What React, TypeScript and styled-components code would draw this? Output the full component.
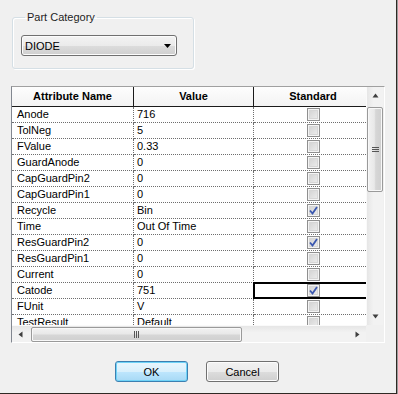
import React from "react";
import styled, { createGlobalStyle } from "styled-components";

const Global = createGlobalStyle`
  html, body { margin: 0; padding: 0; background: #9c9c9c; }
  body { font-family: "Liberation Sans", Arial, sans-serif; font-size: 11px; color: #000; }
  * { box-sizing: border-box; }
`;

const Window = styled.div`
  width: 397px;
  height: 394px;
  background: #f0f0f0;
  border-right: 1px solid #2f2924;
  border-bottom: 1px solid #2f2924;
  padding: 11px 0 0 11px;
  display: flex;
  flex-direction: column;
  overflow: hidden;
`;

const Group = styled.fieldset`
  margin: 0 0 17px 1px;
  width: 182px;
  height: 58px;
  padding: 0 0 0 8px;
  border: 1px solid #d5dfe5;
  border-radius: 3px;
  box-shadow: inset 1px 1px 0 #fff, 1px 1px 0 #fff;
`;

const Legend = styled.legend`
  padding: 0 2px;
  margin-left: 4px;
  font-size: 11px;
  line-height: 13px;
  color: #1e1e1e;
`;

const Select = styled.div`
  margin-top: 11px;
  width: 156px;
  height: 21px;
  border: 1px solid #707070;
  border-radius: 3px;
  background: linear-gradient(#f3f3f3 0%, #ebebeb 50%, #dddddd 51%, #cfcfcf 100%);
  box-shadow: inset 0 0 0 1px #fcfcfc;
  display: flex;
  align-items: center;
  justify-content: space-between;
  padding: 0 5px 0 3px;
  font-size: 11px;
  color: #000;
`;

const Grid = styled.div`
  width: 374px;
  height: 257px;
  border-top: 1px solid #a0a0a0;
  border-left: 1px solid #828790;
  border-right: 1px solid #ffffff;
  border-bottom: 1px solid #ffffff;
  display: grid;
  grid-template-columns: 354px 17px;
  grid-template-rows: 238px 17px;
  background: #f0f0f0;
`;

const TableView = styled.div`
  overflow: hidden;
  background: #fff;
  position: relative;
`;

const Row = styled.div`
  display: grid;
  grid-template-columns: 122px 120px 118px;
  width: 360px;
`;

const HeadCell = styled.div<{ $last?: boolean }>`
  height: 20px;
  background: linear-gradient(#fdfdfd, #f3f3f3);
  border-bottom: 1px solid #1a1a1a;
  border-right: ${(p) => (p.$last ? "none" : "1px solid #1a1a1a")};
  font-weight: bold;
  display: flex;
  align-items: center;
  justify-content: center;
  padding-bottom: 1px;
`;

const Cell = styled.div<{ $pad?: number; $last?: boolean; $selected?: boolean }>`
  position: relative;
  height: 16px;
  border-bottom: 1px dotted #6e6e6e;
  border-right: ${(p) => (p.$last ? "none" : "1px dotted #6e6e6e")};
  padding-left: ${(p) => p.$pad ?? 0}px;
  display: flex;
  align-items: center;
  justify-content: ${(p) => (p.$last ? "center" : "flex-start")};
  white-space: nowrap;
  line-height: 15px;
  &::after {
    content: "";
    display: ${(p) => (p.$selected ? "block" : "none")};
    position: absolute;
    top: -1px;
    left: -1px;
    right: 0;
    bottom: -1px;
    border: 2px solid #000;
  }
`;

const Check = styled.div<{ $on?: boolean }>`
  width: 13px;
  height: 13px;
  border: 1px solid #8f8f8f;
  background: #f4f4f4;
  box-shadow: inset 0 0 0 1px #f4f4f4, inset 0 0 0 2px #d6d6d6;
  background-image: linear-gradient(135deg, #cfcfcf, #f0f0f0);
  display: flex;
  align-items: center;
  justify-content: center;
  position: relative;
  z-index: 1;
`;

const VScroll = styled.div`
  display: flex;
  flex-direction: column;
  background: linear-gradient(90deg, #e6e6e6, #f2f2f2 40%, #f2f2f2);
  border-left: 1px solid #fafafa;
`;

const HScroll = styled.div`
  display: flex;
  align-items: stretch;
  background: linear-gradient(#e6e6e6, #f2f2f2 40%, #f2f2f2);
  border-top: 1px solid #fafafa;
`;

const ArrowBox = styled.div<{ $size?: number }>`
  width: 17px;
  height: 17px;
  flex: none;
  display: flex;
  align-items: center;
  justify-content: center;
`;

const Track = styled.div`
  flex: 1;
  display: flex;
  flex-direction: column;
`;

const HTrack = styled.div`
  flex: 1;
  display: flex;
  align-items: center;
`;

const VThumb = styled.div`
  margin: 3px 0 0 0;
  width: 16px;
  height: 85px;
  border: 1px solid #9a9a9a;
  border-radius: 2px;
  background: linear-gradient(90deg, #f2f2f2, #e8e8e8 45%, #d6d6d6 55%, #cfcfcf);
  box-shadow: inset 0 0 0 1px #f8f8f8;
  display: flex;
  align-items: center;
  justify-content: center;
`;

const HThumb = styled.div`
  margin-left: 2px;
  width: 211px;
  height: 15px;
  border: 1px solid #9a9a9a;
  border-radius: 2px;
  background: linear-gradient(#f2f2f2, #e8e8e8 45%, #d6d6d6 55%, #cfcfcf);
  box-shadow: inset 0 0 0 1px #f8f8f8;
  display: flex;
  align-items: center;
  justify-content: center;
`;

const Corner = styled.div`
  background: #f0f0f0;
`;

const Footer = styled.div`
  display: flex;
  gap: 18px;
  padding: 18px 0 0 104px;
`;

const Button = styled.button<{ $default?: boolean }>`
  width: 73px;
  height: 21px;
  padding: 0;
  font-family: "Liberation Sans", Arial, sans-serif;
  font-size: 11px;
  color: #000;
  border-radius: 3px;
  border: 1px solid ${(p) => (p.$default ? "#3c7fb1" : "#707070")};
  background: ${(p) =>
    p.$default
      ? "linear-gradient(#eaf6fd 0%, #d9f0fc 50%, #bee6fd 51%, #a7d9f5 100%)"
      : "linear-gradient(#f2f2f2 0%, #ebebeb 50%, #dddddd 51%, #cfcfcf 100%)"};
  box-shadow: inset 0 0 0 1px ${(p) => (p.$default ? "#6fd3f7" : "#fcfcfc")};
`;

const Tri = ({ dir }: { dir: "up" | "down" | "left" | "right" }) => {
  const pts = {
    up: "0.5,4.5 3.5,0.5 6.5,4.5",
    down: "0.5,0.5 6.5,0.5 3.5,4.5",
    left: "4.5,0.5 4.5,6.5 0.5,3.5",
    right: "0.5,0.5 0.5,6.5 4.5,3.5",
  }[dir];
  const vert = dir === "up" || dir === "down";
  return (
    <svg width={vert ? 7 : 5} height={vert ? 5 : 7} viewBox={vert ? "0 0 7 5" : "0 0 5 7"}>
      <polygon points={pts} fill="#3f3f3f" />
    </svg>
  );
};

const CheckMark = () => (
  <svg width="9" height="9" viewBox="0 0 9 9">
    <path d="M1 4.5 L3.5 7.5 L8 1" stroke="#3b58b0" strokeWidth="1.8" fill="none" />
  </svg>
);

const rows: [string, string, boolean, boolean?][] = [
  ["Anode", "716", false],
  ["TolNeg", "5", false],
  ["FValue", "0.33", false],
  ["GuardAnode", "0", false],
  ["CapGuardPin2", "0", false],
  ["CapGuardPin1", "0", false],
  ["Recycle", "Bin", true],
  ["Time", "Out Of Time", false],
  ["ResGuardPin2", "0", true],
  ["ResGuardPin1", "0", false],
  ["Current", "0", false],
  ["Catode", "751", true, true],
  ["FUnit", "V", false],
  ["TestResult", "Default", false],
];

export default function App() {
  return (
    <>
      <Global />
      <Window>
        <Group>
          <Legend>Part Category</Legend>
          <Select>
            <span>DIODE</span>
            <svg width="7" height="4" viewBox="0 0 7 4">
              <polygon points="0,0 7,0 3.5,4" fill="#000" />
            </svg>
          </Select>
        </Group>
        <Grid>
          <TableView>
            <Row>
              <HeadCell>Attribute Name</HeadCell>
              <HeadCell>Value</HeadCell>
              <HeadCell $last>Standard</HeadCell>
            </Row>
            {rows.map(([name, value, on, sel]) => (
              <Row key={name}>
                <Cell $pad={5}>{name}</Cell>
                <Cell $pad={3}>{value}</Cell>
                <Cell $last $selected={sel}>
                  <Check $on={on}>{on && <CheckMark />}</Check>
                </Cell>
              </Row>
            ))}
          </TableView>
          <VScroll>
            <ArrowBox>
              <Tri dir="up" />
            </ArrowBox>
            <Track>
              <VThumb>
                <svg width="7" height="7" viewBox="0 0 7 7">
                  <path d="M0 1.5H7M0 3.5H7M0 5.5H7" stroke="#555" strokeWidth="1" />
                </svg>
              </VThumb>
            </Track>
            <ArrowBox>
              <Tri dir="down" />
            </ArrowBox>
          </VScroll>
          <HScroll>
            <ArrowBox>
              <Tri dir="left" />
            </ArrowBox>
            <HTrack>
              <HThumb>
                <svg width="7" height="7" viewBox="0 0 7 7">
                  <path d="M1.5 0V7M3.5 0V7M5.5 0V7" stroke="#555" strokeWidth="1" />
                </svg>
              </HThumb>
            </HTrack>
            <ArrowBox>
              <Tri dir="right" />
            </ArrowBox>
          </HScroll>
          <Corner />
        </Grid>
        <Footer>
          <Button $default>OK</Button>
          <Button>Cancel</Button>
        </Footer>
      </Window>
    </>
  );
}
